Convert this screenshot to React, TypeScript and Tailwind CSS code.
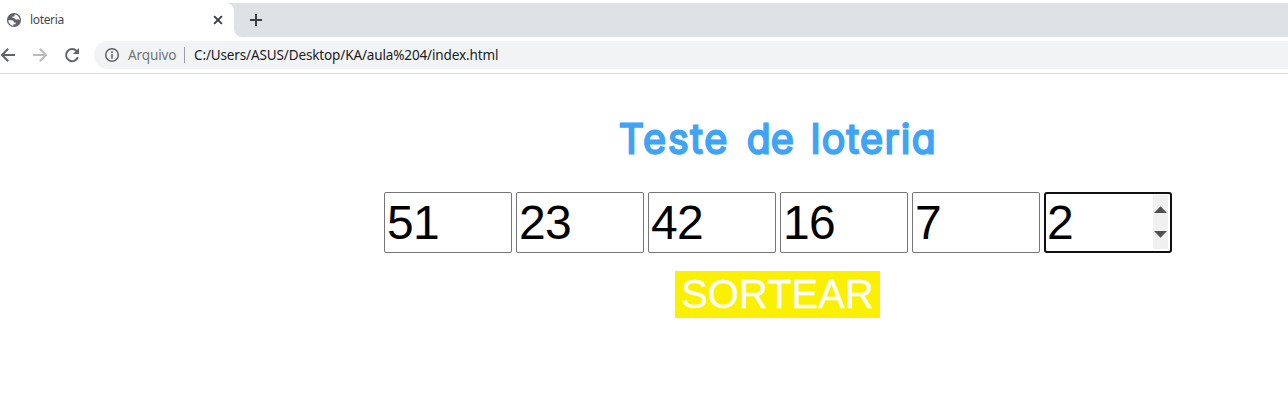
import React from "react";

const numbers = ["51", "23", "42", "16", "7"];

function Globe() {
  return (
    <svg className="size-[16px]" viewBox="0 0 16 16">
      <circle cx="8" cy="8" r="7.1" fill="#5f6368" />
      <path
        d="M2.3 8.2H5.6C7.2 8.2 7.8 8.9 7.8 10.4H9.6V12.2H7.4V13.7C4.5 13.4 2.3 11 2.3 8.2Z M8.6 2.4C11.5 2.6 13.7 5 13.7 7.8V8.3C12.9 7.6 12.4 7.3 11.5 7.3C10.5 7.3 10.4 8 9.7 7.6C9 7.2 9 5.8 6.4 5.8V4.5H8.6Z"
        fill="#fff"
      />
    </svg>
  );
}

function LineIcon({ d, className }: { d: string; className: string }) {
  return (
    <svg className={className} viewBox="0 0 20 20" fill="none" stroke="currentColor" strokeWidth="2">
      <path d={d} />
    </svg>
  );
}

function TabStrip() {
  return (
    <div className="mt-[3px] flex h-[34px] bg-[#dee1e6]">
      <div className="w-[242px] bg-white">
        <div className="flex h-full">
          <div className="flex w-[234px] items-center bg-white pl-[6px]">
            <Globe />
            <span className="ml-[8px] w-[178px] font-['Noto_Sans','Open_Sans',sans-serif] text-[12px] tracking-[-0.35px] text-[#45494d]">
              loteria
            </span>
            <LineIcon className="size-[20px] text-[#3c4043]" d="M6.1 6.1L13.9 13.9M13.9 6.1L6.1 13.9" />
          </div>
          <svg className="h-[34px] w-[8px] overflow-visible" viewBox="0 0 8 34">
            <path d="M-8 0H8V34A8 8 0 0 1 0 26V8A8 8 0 0 0 -8 0Z" fill="#dee1e6" />
          </svg>
        </div>
      </div>
      <div className="flex flex-1 items-center pl-[4px]">
        <LineIcon className="size-[20px] text-[#3c4043]" d="M10 4V16M4 10H16" />
      </div>
    </div>
  );
}

function Toolbar() {
  return (
    <div className="flex h-[37px] items-center border-b border-[#dadce0] bg-white">
      <LineIcon className="ml-[-2px] size-[20px] shrink-0 text-[#5f6368]" d="M17 10H4.5M10.2 3.8L4 10L10.2 16.2" />
      <LineIcon className="ml-[12px] size-[20px] shrink-0 text-[#babcbe]" d="M3 10H15.5M9.8 3.8L16 10L9.8 16.2" />
      <svg className="ml-[12px] size-[20px] shrink-0" viewBox="0 0 20 20">
        <path d="M15.9 12.2A6.1 6.1 0 1 1 14.6 5.9" fill="none" stroke="#5f6368" strokeWidth="2" />
        <path d="M17 3V9H11Z" fill="#5f6368" />
      </svg>
      <div className="ml-[12px] flex h-[28px] flex-1 items-center rounded-l-full bg-[#f1f3f4] pl-[10px] font-['Noto_Sans','Open_Sans',sans-serif] text-[13.5px] whitespace-nowrap">
        <svg className="size-[16px]" viewBox="0 0 16 16">
          <circle cx="8" cy="8" r="6.3" fill="none" stroke="#5f6368" strokeWidth="1.5" />
          <path d="M7.2 4.3H8.8V5.9H7.2ZM7.2 7.2H8.8V11.7H7.2Z" fill="#5f6368" />
        </svg>
        <span className="ml-[8px] w-[56px] tracking-[-0.1px] text-[#70757a]">Arquivo</span>
        <span className="h-[16px] w-px bg-[#9aa0a6]" />
        <span className="ml-[9px] tracking-[-0.13px] text-[#202124]">C:/Users/ASUS/Desktop/KA/aula%204/index.html</span>
      </div>
    </div>
  );
}

export default function App() {
  return (
    <div className="flex h-[408px] w-[1288px] flex-col overflow-hidden bg-white">
      <TabStrip />
      <Toolbar />
      <main className="flex flex-1 flex-col">
        <h1 className="mt-[35px] ml-[619px] flex h-[60px] items-center font-['Inter',sans-serif] text-[39px] leading-[60px] font-light whitespace-nowrap text-[#3fa4f6] [font-feature-settings:'cv11'] [-webkit-text-stroke:2.8px_#3fa4f6] [stroke-linejoin:round]">
          <span className="w-[128px] tracking-[2.4px]">Teste</span>
          <span className="w-[64px] tracking-[0.5px]">de</span>
          <span className="tracking-[1.9px]">loteria</span>
        </h1>
        <div className="mt-[23px] ml-[384px] flex gap-[4px] font-['Liberation_Sans',Arial,sans-serif] text-[48px] leading-[59px] text-black">
          {numbers.map((n) => (
            <div key={n} className="h-[61px] w-[128px] rounded-[2px] border border-[#767676] pl-[2px] tracking-[-0.6px]">{n}</div>
          ))}
          <div className="flex h-[61px] w-[128px] justify-between rounded-[3px] border-2 border-[#101010] pl-px leading-[57px]">
            <span>2</span>
            <span className="mt-px mr-[2px] h-[54px] w-[15px] bg-[#f0f0f0]">
              <svg className="block h-[54px] w-[15px]" viewBox="0 0 15 54" fill="#505050">
                <path d="M1 18L7.5 11.3L14 18ZM1 36H14L7.5 42.8Z" />
              </svg>
            </span>
          </div>
        </div>
        <button className="mt-[18px] ml-[675px] h-[47px] w-[205px] bg-[#fbf000] font-['Liberation_Sans',Arial,sans-serif] text-[40px] leading-[47px] text-white [-webkit-text-stroke:0.3px_white]">
          SORTEAR
        </button>
      </main>
    </div>
  );
}
